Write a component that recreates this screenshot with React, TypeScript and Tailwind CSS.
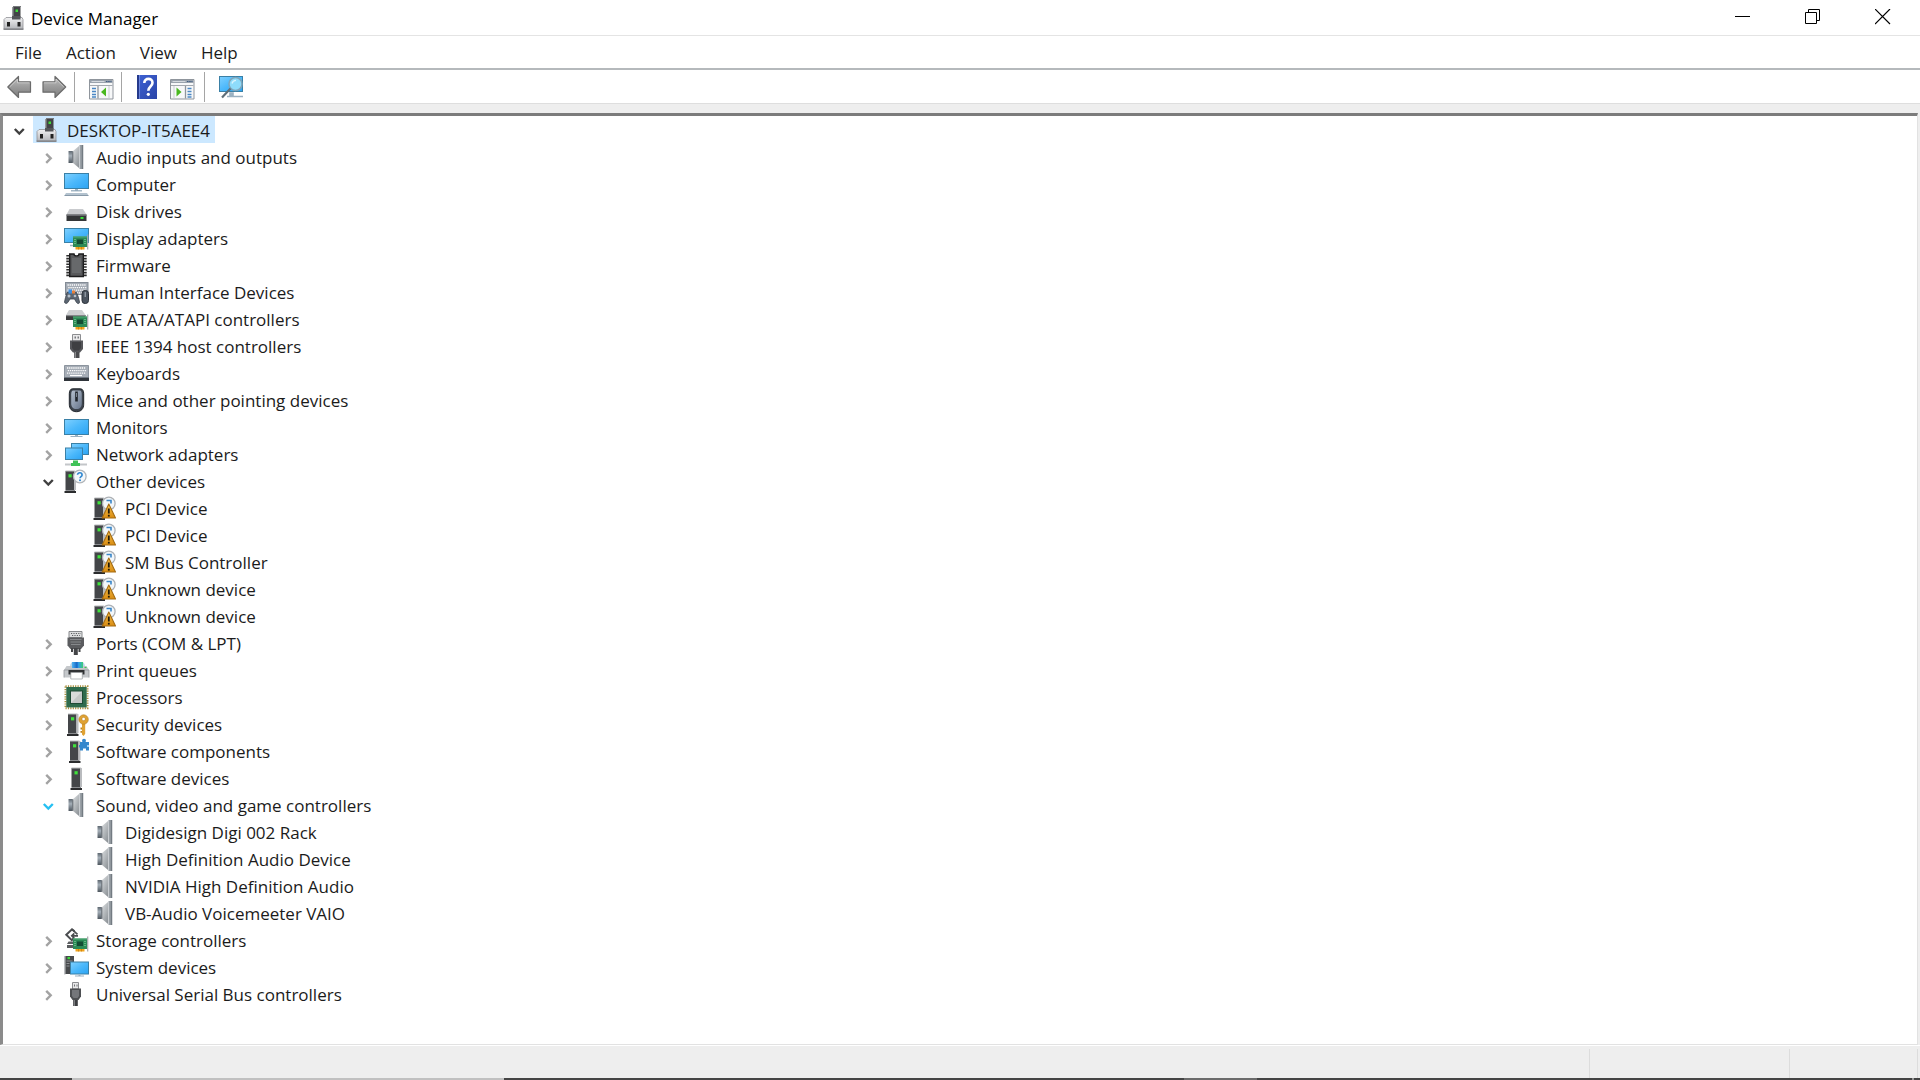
import { useState, type ReactNode } from "react";

type Node = {
  id: string;
  label: string;
  icon: ReactNode;
  open?: boolean;
  children?: Node[];
};

function Svg({ children }: { children: ReactNode }) {
  return (
    <svg className="h-6 w-6 shrink-0 overflow-visible" viewBox="0 0 24 24" aria-hidden="true">
      {children}
    </svg>
  );
}

/* Shared icon parts */

function Gradients() {
  return (
    <svg className="absolute h-0 w-0" aria-hidden="true">
      <defs>
        <linearGradient id="screen" x1="0" y1="0" x2="1" y2="1">
          <stop offset="0" stopColor="#7fd0ff" />
          <stop offset="0.5" stopColor="#4bb8fb" />
          <stop offset="1" stopColor="#2ba3f3" />
        </linearGradient>
        <linearGradient id="metal" x1="0" y1="0" x2="0" y2="1">
          <stop offset="0" stopColor="#f2f2f3" />
          <stop offset="1" stopColor="#b4b6ba" />
        </linearGradient>
        <linearGradient id="cone" x1="0" y1="0" x2="1" y2="1">
          <stop offset="0" stopColor="#dfe2e4" />
          <stop offset="1" stopColor="#7d8388" />
        </linearGradient>
        <linearGradient id="magnet" x1="0" y1="0" x2="0" y2="1">
          <stop offset="0" stopColor="#5d6770" />
          <stop offset="0.4" stopColor="#a5afb8" />
          <stop offset="1" stopColor="#4d565e" />
        </linearGradient>
        <linearGradient id="arrow" x1="0" y1="0" x2="0" y2="1">
          <stop offset="0" stopColor="#c0c0c0" />
          <stop offset="0.5" stopColor="#9b9b9b" />
          <stop offset="1" stopColor="#7c7c7c" />
        </linearGradient>
        <linearGradient id="warn" x1="0" y1="0" x2="0" y2="1">
          <stop offset="0" stopColor="#f8c14a" />
          <stop offset="1" stopColor="#d98c12" />
        </linearGradient>
        <linearGradient id="book" x1="0" y1="0" x2="1" y2="1">
          <stop offset="0" stopColor="#3f62d4" />
          <stop offset="1" stopColor="#2a45a8" />
        </linearGradient>
        <linearGradient id="mouse" x1="0" y1="0" x2="1" y2="1">
          <stop offset="0" stopColor="#b4c0cf" />
          <stop offset="1" stopColor="#66748a" />
        </linearGradient>
        <linearGradient id="ink" x1="0" y1="0" x2="1" y2="0">
          <stop offset="0" stopColor="#4fb4f2" />
          <stop offset="0.45" stopColor="#1667c4" />
          <stop offset="0.6" stopColor="#2f9de8" />
          <stop offset="1" stopColor="#3fcf72" />
        </linearGradient>
      </defs>
    </svg>
  );
}

function Screen({ x, y, w, h }: { x: number; y: number; w: number; h: number }) {
  return <rect x={x + 0.5} y={y + 0.5} width={w - 1} height={h - 1} fill="url(#screen)" stroke="#3a80a6" />;
}

function Card({ y }: { y: number }) {
  return (
    <g>
      <rect x="11.5" y={y + 10} width="9" height="3" fill="#f0a31c" />
      <path d={`M14.5 ${y + 10}v3M17.5 ${y + 10}v3`} stroke="#c47a0a" strokeWidth="0.7" />
      <rect x="9" y={y} width="14" height="10.5" fill="#2c8a56" />
      <path d={`M9 ${y + 0.5}h14`} stroke="#56ad7b" />
      <rect x="13" y={y + 3} width="6" height="4.5" fill="#134c33" />
      <path d={`M11 ${y + 2.5}v5.5M21 ${y + 2.5}v5.5`} stroke="#9adfae" strokeDasharray="1 1" />
      <path d={`M23.7 ${y - 2}v15`} stroke="#a3a6a9" strokeWidth="1.2" />
    </g>
  );
}

function Tower({ x }: { x: number }) {
  return (
    <g>
      <path d={`M${x + 1} 2h8.500v19h-8.500z`} fill="#444649" />
      <path d={`M${x + 1} 1.500h9l1.500.800v18.700h-2v-18.500h-8.500z`} fill="#b9bbbe" />
      <path d={`M${x} 22h11.5v2h-11.5z`} fill="#2b2c2e" />
      <path d={`M${x + 1} 21h9.5v1h-9.5z`} fill="#8b8d90" />
      <rect x={x + 4} y="5.200" width="3.200" height="3.200" fill="#3fe33b" />
    </g>
  );
}

function Keys({ x, y, cols, rows }: { x: number; y: number; cols: number; rows: number }) {
  return (
    <g>
      {Array.from({ length: rows }, (_, r) => (
        <path
          key={r}
          d={`M${x + (r % 2) * 0.8} ${y + r * 2.6}h${cols * 2}`}
          stroke="#fff"
          strokeWidth="1.3"
          strokeDasharray="1.3 0.8"
        />
      ))}
    </g>
  );
}

/* Device icons */

const hub = (
  <Svg>
    <g transform="translate(1 0)">
      <path d="M10 0h7.500v13H10z" fill="#424447" />
      <path d="M10 0h8v1h-8z" fill="#77797c" />
      <path d="M9 1h1.500v12H9z" fill="#9a9c9f" />
      <rect x="12.500" y="3.500" width="2.500" height="2.500" fill="#3fdc3a" />
      <path d="M3 11.500h16l1 2V23H1v-9.500z" fill="url(#metal)" stroke="#8f9195" strokeWidth="0.800" />
      <path d="M9 10h8.500v3.500H9z" fill="#54565a" />
      <path d="M4 16h3v4.500H4zM14.500 16h3v4.500h-3z" fill="#222" />
      <path d="M.5 22.500h20V24H.5z" fill="#85878b" />
    </g>
  </Svg>
);

const speaker = (
  <Svg>
    <path d="M4.500 6H9v12H4.500z" fill="url(#magnet)" />
    <path d="M8.500 6.500 15 1h2v22h-2l-6.500-5.500z" fill="url(#cone)" />
    <path d="M8.800 6.500v11" stroke="#5e666d" />
    <path d="M15.500 0H19v24h-3.500z" fill="#9aa1a7" />
    <path d="M15.500 1v22" stroke="#c9cdd1" />
    <path d="M18.500 0v24" stroke="#737b82" strokeWidth="1.500" />
  </Svg>
);

const computer = (
  <Svg>
    <Screen x={0} y={1} w={25} h={16} />
    <path d="M11 17h3v2h-3z" fill="#9eb4c4" />
    <path d="M7 18.800h11" stroke="#8fa7b8" strokeWidth="1.200" />
    <path d="M2 21h21l1.500 2.500H.5z" fill="#b4c3cf" />
    <path d="M.5 23.500h24" stroke="#8799a8" />
  </Svg>
);

const disk = (
  <Svg>
    <path d="M5.500 10h13.500l3.500 5.500h-20z" fill="#c9cbce" />
    <path d="M2.500 15.500h20V22h-20z" fill="#343638" />
    <path d="M2.500 15.500h20v1.300h-20z" fill="#77797d" />
    <rect x="16.500" y="18" width="3" height="2" fill="#3cdf3a" />
  </Svg>
);

const display = (
  <Svg>
    <Screen x={0} y={2} w={25} h={15} />
    <path d="M6 19.500h6" stroke="#9fb3c2" strokeWidth="1.500" />
    <Card y={10.5} />
  </Svg>
);

const firmware = (
  <Svg>
    <path d="M4.300 2v21.500M20.700 2v21.500" stroke="#2c2c2c" strokeWidth="4" strokeDasharray="1.600 1.200" />
    <path d="M5.700 1H10c0 2.500 5 2.500 5 0h4.300v22.500H5.700z" fill="#58595b" stroke="#1d1d1e" strokeWidth="1.400" />
    <path d="M8 5h9v15H8z" fill="#67696b" />
  </Svg>
);

const hid = (
  <Svg>
    <rect x="1.500" y="2.500" width="22.500" height="12" fill="#a4abb4" stroke="#838b95" />
    <Keys x={3.5} y={5} cols={9} rows={4} />
    <path
      d="M3 12.500h9.500l2 5 1 4.500c0 2-2 2-3 .5L10.500 19H6l-2.200 3.500c-1 1.500-3.300 1-3.300-.5l1-4.500z"
      fill="#5c6672"
      stroke="#3b434d"
      strokeWidth="0.800"
    />
    <path d="M4.500 9.500h3.500v4H4.500z" fill="#3d8fe0" />
    <path d="M8 10.500h3v3H8z" fill="#e98038" />
    <circle cx="5" cy="16" r="1.500" fill="#b5bfca" />
    <circle cx="11" cy="16" r="1.300" fill="#b5bfca" />
    <rect x="18" y="10.500" width="6.500" height="13" rx="3" fill="#4b545f" stroke="#2c333b" />
    <path d="M21.200 12v5" stroke="#aab4bf" />
  </Svg>
);

const ide = (
  <Svg>
    <path d="M5 3h13l3.500 5H2z" fill="#cdcfd1" />
    <path d="M2 8h19.500v5H2z" fill="#3a3c3e" />
    <path d="M2 8h19.500v1.200H2z" fill="#85878a" />
    <Card y={9.5} />
  </Svg>
);

const firewire = (
  <Svg>
    <path d="M8.500.5h8V7h-8z" fill="#e9e9ea" stroke="#8c8d90" />
    <path d="M10.500 2.500H12v2h-1.500zM13.500 2.500H15v2h-1.500z" fill="#77797c" />
    <path d="M6 6.500h13v8.500l-3 3.500H9L6 15z" fill="#55565a" />
    <path d="M8 8h9v6l-2 2.500h-5L8 14z" fill="#3e3f42" />
    <path d="M10.200 18h5.300v6h-5.300z" fill="#4b4c4f" />
    <path d="M11.500 18v6" stroke="#8c8d90" />
  </Svg>
);

const keyboard = (
  <Svg>
    <path d="M.5 4.500h24v12H.5z" fill="#a6adb6" stroke="#8c949e" />
    <Keys x={3} y={7} cols={9.5} rows={3} />
    <path d="M6 14.500h12" stroke="#fff" strokeWidth="1.200" />
    <path d="M0 16.500h25V20H0z" fill="#2f343a" />
    <path d="M0 16.500h25" stroke="#6d757f" />
  </Svg>
);

const mouse = (
  <Svg>
    <path
      d="M8.500.8h8c2 0 3.200 2 3.200 5v10.400c0 4.500-2.500 7.500-7.200 7.500s-7.200-3-7.200-7.500V5.800c0-3 1.200-5 3.200-5z"
      fill="#3c434c"
      stroke="#22272d"
    />
    <path d="M9 2.500h7c1 0 1.800 1.500 1.800 4v9c0 3.500-1.800 5.500-5.300 5.500s-5.300-2-5.300-5.500v-9c0-2.500.8-4 1.800-4z" fill="url(#mouse)" />
    <path d="M11.200 3.500h2.600v10h-2.600z" fill="#20252b" />
    <path d="M12.500 5v4" stroke="#77828f" />
  </Svg>
);

const monitor = (
  <Svg>
    <Screen x={0} y={4} w={25} h={16} />
    <path d="M11 20h3v1.500h-3z" fill="#9eb4c4" />
    <path d="M6.500 21.500h12" stroke="#9ab0c0" />
  </Svg>
);

const network = (
  <Svg>
    <Screen x={7} y={1} w={18} h={12} />
    <Screen x={1} y={5.5} w={18} h={12.5} />
    <path d="M9 18.500h5V21h2v3H7v-3h2z" fill="#3fc257" />
    <path d="M1 22.500h6M16 22.500h7" stroke="#c3c6c9" strokeWidth="2" />
  </Svg>
);

const other = (
  <Svg>
    <Tower x={0.5} />
    <circle cx="15.800" cy="7.500" r="6.300" fill="#f5f8fa" stroke="#b1b5b9" strokeWidth="1.300" />
    <path
      d="M13.500 5.800c0-2.700 4.600-2.700 4.600.1 0 1.700-2.100 1.700-2.100 3.400"
      fill="none"
      stroke="#2f86cf"
      strokeWidth="1.600"
    />
    <circle cx="16" cy="11.200" r="1" fill="#2f86cf" />
  </Svg>
);

const unknown = (
  <Svg>
    <Tower x={0.5} />
    <circle cx="15.800" cy="7.500" r="6.300" fill="#f3f7fa" stroke="#adb1b5" strokeWidth="1.300" />
    <path d="M13.500 4.500H18v3" fill="none" stroke="#3a86c8" strokeWidth="1.600" />
    <path d="M15.800 8 22.500 22H9.200z" fill="url(#warn)" stroke="#a56c12" strokeWidth="1.100" strokeLinejoin="round" />
    <path d="M15.800 12.500v5" stroke="#221a08" strokeWidth="1.800" />
    <path d="M15.800 18.800v1.800" stroke="#221a08" strokeWidth="1.800" />
  </Svg>
);

const ports = (
  <Svg>
    <path d="M5 .5h13v6H5z" fill="#dcddde" stroke="#87898c" />
    <path d="M7 2.500h10M8 4.500h8" stroke="#5e6063" strokeDasharray="1.200 1.200" />
    <path d="M3.500 6.500H20v8l-3 3.500H6.500l-3-3.500z" fill="#5b5c5f" />
    <path d="M6 8.500h11.500M6.500 11h10.500M7 13.500h9.500" stroke="#86888b" />
    <path d="M7 17h2v4H7zM14.500 17h2v4h-2zM9.800 17h4v7h-4z" fill="#434447" />
  </Svg>
);

const printer = (
  <Svg>
    <path d="M8 4h11v6H8z" fill="url(#ink)" />
    <path d="M6.500 6 8 4v6H5.500zM19 4l1.500 2 1 4H19z" fill="#b9d6ea" />
    <path d="M2.500 8h20L25 12v7.500H0V12z" fill="#c5c8cb" />
    <path d="M0 19.500V12h25v7.500" fill="none" stroke="#94989c" strokeWidth="0.800" />
    <path d="M8 7.500h11V10H8z" fill="url(#ink)" />
    <path d="M4.500 12h16v4.500h-16z" fill="#303234" />
    <path d="M6.800 14.500h11.500V21H6.800z" fill="#fff" stroke="#9a9da0" strokeWidth="0.700" />
    <path d="M20.500 9.500h2" stroke="#41c552" strokeWidth="1.200" />
  </Svg>
);

const processor = (
  <Svg>
    <rect x="1.500" y="1.200" width="22" height="22" fill="none" stroke="#a98f3c" strokeWidth="2" strokeDasharray="1.200 1.200" />
    <rect x="2.300" y="2" width="20.400" height="20.400" fill="#2f6b4c" />
    <rect x="6.500" y="6" width="12" height="12.500" fill="#d9dbda" stroke="#1f4b35" />
    <path d="M7 18 18 6.500V18z" fill="#c4c7c6" />
  </Svg>
);

const security = (
  <Svg>
    <Tower x={3} />
    <path d="M18 11.500h3.200v10.300l-1.600 2.200-1.600-1.500z" fill="#e0a233" />
    <path d="M18 15.500h-1.500v2H18zM18 19h-1.500v1.800H18z" fill="#b98121" />
    <path
      fillRule="evenodd"
      d="M19.600 2.800a4.700 4.700 0 1 0 .01 0zM19.600 5.300a1.700 1.700 0 1 1-.01 0z"
      fill="#e0a233"
      stroke="#b27c1e"
      strokeWidth="0.600"
    />
  </Svg>
);

const component = (
  <Svg>
    <Tower x={5} />
    <circle cx="20" cy="1.800" r="2" fill="#3387cd" />
    <path d="M16 3h9v8.500h-3V9.500h-3v2h-3z" fill="#3387cd" />
    <path d="M15 6h1.500v2.500H15z" fill="#3387cd" />
    <path d="M23 6h2v2h-2z" fill="#9fd0f3" />
  </Svg>
);

const software = (
  <Svg>
    <Tower x={6.5} />
  </Svg>
);

const storage = (
  <Svg>
    <path d="M3 17h8v3H3zM4.500 13.500h5l1.500 2.500H3z" fill="#5a5c5f" />
    <path d="M10.500 3.300 8 1.300 2.300 6.800l5.500 5.300 2-1.800" fill="none" stroke="#4a4c4f" strokeWidth="2" />
    <path d="m8 1.300 5.500 5M14 7.800H8M10.300 5.300 7.800 7.800l2.500 2.500" fill="none" stroke="#4a4c4f" strokeWidth="1.700" />
    <Card y={10.5} />
  </Svg>
);

const system = (
  <Svg>
    <path d="M1 1h9v18H1z" fill="#47494c" />
    <path d="M.8 1v18.500" stroke="#b9bbbe" strokeWidth="1.500" />
    <path d="M2.500 6h6M2.500 8.500h3M2.500 11h3" stroke="#8f9194" />
    <rect x="3.500" y="2" width="2.500" height="2.200" fill="#3fdc3a" />
    <Screen x={6} y={6.5} w={19} h={13} />
    <path d="M14.500 19.500h2V21h-2z" fill="#9eb4c4" />
    <path d="M11 21h9" stroke="#9ab0c0" />
  </Svg>
);

const usb = (
  <Svg>
    <path d="M8.500.5h6V7h-6z" fill="#e9e9ea" stroke="#8c8d90" />
    <path d="M10 2.500h1v2h-1zM12.500 2.500h1v2h-1z" fill="#6e7073" />
    <path d="M6 6.500h11v8L14.500 18h-6L6 14.500z" fill="#4e5053" />
    <path d="M8 8h7v6l-1.500 2h-4L8 14z" fill="#74767a" />
    <path d="M9.200 18h4.600v6H9.200z" fill="#3c3d40" />
    <path d="M10.500 18v6" stroke="#7d7f82" />
  </Svg>
);

const tree: Node = {
  id: "root",
  label: "DESKTOP-IT5AEE4",
  icon: hub,
  open: true,
  children: [
    { id: "audio", label: "Audio inputs and outputs", icon: speaker, children: [] },
    { id: "computer", label: "Computer", icon: computer, children: [] },
    { id: "disk", label: "Disk drives", icon: disk, children: [] },
    { id: "display", label: "Display adapters", icon: display, children: [] },
    { id: "firmware", label: "Firmware", icon: firmware, children: [] },
    { id: "hid", label: "Human Interface Devices", icon: hid, children: [] },
    { id: "ide", label: "IDE ATA/ATAPI controllers", icon: ide, children: [] },
    { id: "1394", label: "IEEE 1394 host controllers", icon: firewire, children: [] },
    { id: "keyboards", label: "Keyboards", icon: keyboard, children: [] },
    { id: "mice", label: "Mice and other pointing devices", icon: mouse, children: [] },
    { id: "monitors", label: "Monitors", icon: monitor, children: [] },
    { id: "network", label: "Network adapters", icon: network, children: [] },
    {
      id: "other",
      label: "Other devices",
      icon: other,
      open: true,
      children: [
        { id: "pci1", label: "PCI Device", icon: unknown },
        { id: "pci2", label: "PCI Device", icon: unknown },
        { id: "smbus", label: "SM Bus Controller", icon: unknown },
        { id: "unknown1", label: "Unknown device", icon: unknown },
        { id: "unknown2", label: "Unknown device", icon: unknown },
      ],
    },
    { id: "ports", label: "Ports (COM & LPT)", icon: ports, children: [] },
    { id: "print", label: "Print queues", icon: printer, children: [] },
    { id: "processors", label: "Processors", icon: processor, children: [] },
    { id: "security", label: "Security devices", icon: security, children: [] },
    { id: "components", label: "Software components", icon: component, children: [] },
    { id: "software", label: "Software devices", icon: software, children: [] },
    {
      id: "sound",
      label: "Sound, video and game controllers",
      icon: speaker,
      open: true,
      children: [
        { id: "digi", label: "Digidesign Digi 002 Rack", icon: speaker },
        { id: "hda", label: "High Definition Audio Device", icon: speaker },
        { id: "nvidia", label: "NVIDIA High Definition Audio", icon: speaker },
        { id: "vaio", label: "VB-Audio Voicemeeter VAIO", icon: speaker },
      ],
    },
    { id: "storage", label: "Storage controllers", icon: storage, children: [] },
    { id: "system", label: "System devices", icon: system, children: [] },
    { id: "usb", label: "Universal Serial Bus controllers", icon: usb, children: [] },
  ],
};

function TreeItem({
  node,
  selected,
  hot,
  onSelect,
}: {
  node: Node;
  selected: string;
  hot: string;
  onSelect: (id: string) => void;
}) {
  const [open, setOpen] = useState(!!node.open);
  const isSelected = selected === node.id;

  return (
    <li role="treeitem" aria-selected={isSelected} aria-expanded={node.children ? open : undefined}>
      <div className="flex h-[27px]">
        {node.children ? (
          <button
            aria-label={`${open ? "Collapse" : "Expand"} ${node.label}`}
            onClick={() => setOpen(!open)}
            className={`flex w-[27px] shrink-0 items-center justify-center pt-1 ${
              !open ? "text-[#a3a3a3]" : hot === node.id ? "text-[#26c0f2]" : "text-[#404040]"
            }`}
          >
            <svg className="h-[13px] w-[13px]" viewBox="0 0 13 13" fill="none" stroke="currentColor" strokeWidth={2.4} aria-hidden="true">
              <path d={open ? "M1.800 4 6.300 8.500 10.800 4" : "M4.200 1.800 8.700 6.300 4.200 10.800"} />
            </svg>
          </button>
        ) : (
          <span className="w-[27px] shrink-0" />
        )}
        <button
          onClick={() => onSelect(node.id)}
          className={`flex items-center gap-2 pt-px pr-[5px] pl-[2px] whitespace-nowrap ${isSelected ? "bg-[#cce8ff]" : ""}`}
        >
          {node.icon}
          <span className="pt-[2px]">{node.label}</span>
        </button>
      </div>
      {open && node.children && node.children.length > 0 && (
        <ul role="group" className="pl-[29px]">
          {node.children.map((child) => (
            <TreeItem key={child.id} node={child} selected={selected} hot={hot} onSelect={onSelect} />
          ))}
        </ul>
      )}
    </li>
  );
}

/* Toolbar */

function Pane({ left }: { left?: boolean }) {
  return (
    <Svg>
      <path d="M.5 4.500h23.500V24H.5z" fill="#f7f8f9" stroke="#8f959c" />
      <path d="M1 5h22.500v3H1z" fill="#9aa3ad" />
      <path d="M2.500 6.500h13" stroke="#d4d9de" />
      <path d="M17 6.500h5.500" stroke="#3f5b80" strokeDasharray="1.500 0.700" />
      <path d="M1 10.500h22.500" stroke="#a4a9af" />
      {left ? (
        <>
          <path d="M3 13.500h4M3 16.500h4M3 19.500h4M3 22h4" stroke="#4a86c4" strokeWidth="1.300" />
          <path d="M9 11v12.500" stroke="#8f959c" strokeWidth="1.300" />
          <path d="M17 12.500v9L12 17z" fill="#49b81f" />
          <path d="M20 11v12.500" stroke="#c9cdd1" />
        </>
      ) : (
        <>
          <path d="M17.500 13.500h4M17.500 16.500h4M17.500 19.500h4M17.500 22h4" stroke="#4a86c4" strokeWidth="1.300" />
          <path d="M15.500 11v12.500" stroke="#8f959c" strokeWidth="1.300" />
          <path d="M6.500 12.500v9l5-4.500z" fill="#49b81f" />
          <path d="M4 11v12.500" stroke="#c9cdd1" />
        </>
      )}
    </Svg>
  );
}

function ToolButton({ label, children }: { label: string; children: ReactNode }) {
  return (
    <button aria-label={label} title={label} className="flex h-8 w-[35px] items-center justify-center pt-px">
      {children}
    </button>
  );
}

function Separator() {
  return <span className="mx-[2px] h-[30px] w-px bg-[#a5a5a5]" />;
}

function Toolbar() {
  return (
    <div role="toolbar" className="flex h-[33px] shrink-0 items-center bg-white">
      <div className="flex pr-px pl-px">
        <ToolButton label="Back">
          <Svg>
            <path d="M.8 12 11.500 1.500v5.300h12v10.400h-12v5.300z" fill="url(#arrow)" stroke="#6b6b6b" strokeWidth="1.200" strokeLinejoin="round" />
            <path d="M2.800 11.800 10.500 4.200v3.600h12" fill="none" stroke="#d2d2d2" strokeWidth="0.800" />
          </Svg>
        </ToolButton>
        <ToolButton label="Forward">
          <Svg>
            <path d="M23.700 12 13 1.500v5.300H1v10.400h12v5.300z" fill="url(#arrow)" stroke="#6b6b6b" strokeWidth="1.200" strokeLinejoin="round" />
            <path d="M2 7.800h12V4.200l7.700 7.600" fill="none" stroke="#d2d2d2" strokeWidth="0.800" />
          </Svg>
        </ToolButton>
      </div>
      <Separator />
      <div className="flex pr-px pl-[6px]">
        <ToolButton label="Show/Hide Console Tree">
          <Pane left />
        </ToolButton>
      </div>
      <Separator />
      <div className="flex pr-[3px] pl-[5px]">
        <ToolButton label="Help">
          <Svg>
            <rect x="2" y="0" width="20" height="24" fill="url(#book)" />
            <path d="M3 0v24" stroke="#253a8c" strokeWidth="2" />
            <path d="M4.500 0v24" stroke="#8ea4ec" strokeWidth="0.600" />
            <path d="M9.300 8c0-5.500 8.200-5.500 8.200-.3 0 3.800-4.200 3.800-4.200 8" fill="none" stroke="#fff" strokeWidth="2.600" />
            <circle cx="13.300" cy="19.300" r="1.600" fill="#fff" />
          </Svg>
        </ToolButton>
        <ToolButton label="Show/Hide Action Pane">
          <Pane />
        </ToolButton>
      </div>
      <Separator />
      <div className="flex pl-[6px]">
        <ToolButton label="Scan for hardware changes">
          <Svg>
            <Screen x={0} y={1} w={24} h={16} />
            <path d="M8 21.500h16M11 18h3v3h-3z" stroke="#9ab0c0" strokeWidth="1.600" fill="#9eb4c4" />
            <circle cx="16.500" cy="9" r="6.500" fill="#8edcfb" stroke="#7fa6bb" strokeWidth="1.500" />
            <path d="M13 8.500c.5-2 2-3.200 4-3.200" stroke="#d8f4ff" strokeWidth="1.300" fill="none" />
            <path d="M11.500 13.500 3 22.500" stroke="#5f6e78" strokeWidth="2.200" />
          </Svg>
        </ToolButton>
      </div>
    </div>
  );
}

const menus = ["File", "Action", "View", "Help"];

export default function App() {
  const [selected, setSelected] = useState("root");

  return (
    <div className="flex h-screen flex-col bg-white font-['Open_Sans','Noto_Sans',sans-serif] text-[17px] leading-6 text-[#1b1b1b]">
      <Gradients />

      {/* Title bar */}
      <header className="flex h-[35px] shrink-0 items-center justify-between bg-white">
        <div className="flex items-center gap-[5px] pl-[2px] text-black">
          {hub}
          <h1 className="pt-[3px]">Device Manager</h1>
        </div>
        <div className="flex h-full pr-[2px] pb-px">
          <button aria-label="Minimize" className="flex h-full w-[70px] items-center justify-center">
            <svg className="h-4 w-4" viewBox="0 0 16 16" stroke="#000" aria-hidden="true">
              <path d="M0 7.500h15" />
            </svg>
          </button>
          <button aria-label="Restore" className="flex h-full w-[70px] items-center justify-center">
            <svg className="h-4 w-4" viewBox="0 0 16 16" fill="none" stroke="#000" aria-hidden="true">
              <path d="M.5 3.500h11v11H.5zM3.500 3V.5h11v11H12" />
            </svg>
          </button>
          <button aria-label="Close" className="flex h-full w-[70px] items-center justify-center">
            <svg className="h-4 w-4" viewBox="0 0 16 16" stroke="#000" strokeWidth={1.2} aria-hidden="true">
              <path d="m0 0 15 15M15 0 0 15" />
            </svg>
          </button>
        </div>
      </header>

      {/* Menu bar */}
      <nav className="flex h-[35px] shrink-0 items-center border-t border-b-2 border-t-[#e4e4e4] border-b-[#b5b9bc] pt-[2px] pl-[3px]">
        {menus.map((menu) => (
          <button key={menu} className="px-3">
            {menu}
          </button>
        ))}
      </nav>

      <Toolbar />

      {/* Device tree */}
      <main className="flex min-h-0 flex-1 flex-col border-t border-t-[#dedede] bg-[#eeeeee] pt-[9px] pr-[2px]">
        <ul
          role="tree"
          className="min-h-0 flex-1 overflow-hidden border-t-[3px] border-r border-b border-l-[3px] border-t-[#7b7b7b] border-r-[#e2e2e2] border-b-[#e2e2e2] border-l-[#8b8b8b] bg-white pl-[3px]"
        >
          <TreeItem node={tree} selected={selected} hot="sound" onSelect={setSelected} />
        </ul>
      </main>

      {/* Status bar */}
      <footer className="flex h-[33px] shrink-0 border-t border-t-white bg-[#eeeeee] pt-[3px] pr-[2px]">
        <span className="flex-1 border-r border-r-[#dcdcdc]" />
        <span className="w-[200px] border-r border-r-[#dcdcdc]" />
        <span className="w-32 border-r border-r-[#dcdcdc]" />
      </footer>

      {/* Top edge of the taskbar */}
      <div className="flex h-[2px] shrink-0 bg-[#444444]">
        <span className="w-[72px]" />
        <span className="w-[432px] bg-[#c0c0c0]" />
        <span className="w-[680px]" />
        <span className="w-[73px] bg-[#6b6b6b]" />
        <span className="flex-1" />
        <span className="mr-[6px] w-[2px] bg-[#999999]" />
      </div>
    </div>
  );
}
